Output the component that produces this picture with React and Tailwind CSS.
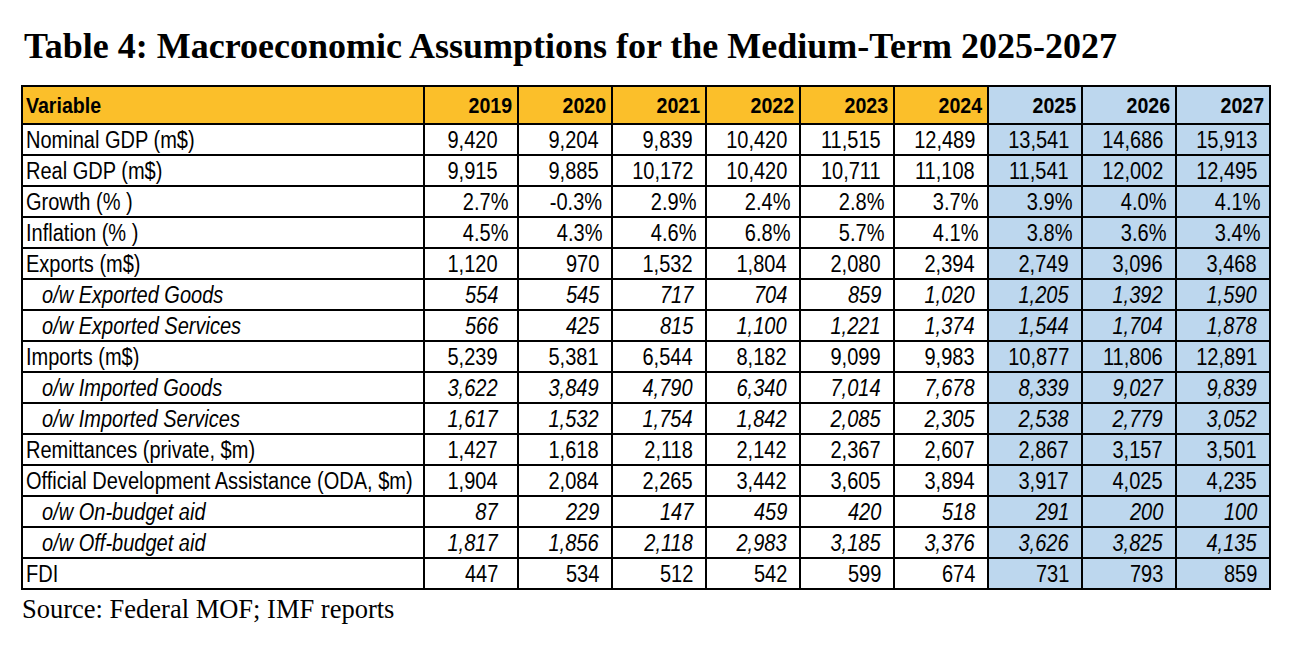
const years = ['2019', '2020', '2021', '2022', '2023', '2024', '2025', '2026', '2027'];

const rows = [
  { label: 'Nominal GDP (m$)', v: ['9,420', '9,204', '9,839', '10,420', '11,515', '12,489', '13,541', '14,686', '15,913'] },
  { label: 'Real GDP (m$)', v: ['9,915', '9,885', '10,172', '10,420', '10,711', '11,108', '11,541', '12,002', '12,495'] },
  { label: 'Growth (% )', pct: true, v: ['2.7%', '-0.3%', '2.9%', '2.4%', '2.8%', '3.7%', '3.9%', '4.0%', '4.1%'] },
  { label: 'Inflation (% )', pct: true, v: ['4.5%', '4.3%', '4.6%', '6.8%', '5.7%', '4.1%', '3.8%', '3.6%', '3.4%'] },
  { label: 'Exports (m$)', v: ['1,120', '970', '1,532', '1,804', '2,080', '2,394', '2,749', '3,096', '3,468'] },
  { label: 'o/w Exported Goods', sub: true, v: ['554', '545', '717', '704', '859', '1,020', '1,205', '1,392', '1,590'] },
  { label: 'o/w Exported Services', sub: true, v: ['566', '425', '815', '1,100', '1,221', '1,374', '1,544', '1,704', '1,878'] },
  { label: 'Imports (m$)', v: ['5,239', '5,381', '6,544', '8,182', '9,099', '9,983', '10,877', '11,806', '12,891'] },
  { label: 'o/w Imported Goods', sub: true, v: ['3,622', '3,849', '4,790', '6,340', '7,014', '7,678', '8,339', '9,027', '9,839'] },
  { label: 'o/w Imported Services', sub: true, v: ['1,617', '1,532', '1,754', '1,842', '2,085', '2,305', '2,538', '2,779', '3,052'] },
  { label: 'Remittances (private, $m)', v: ['1,427', '1,618', '2,118', '2,142', '2,367', '2,607', '2,867', '3,157', '3,501'] },
  { label: 'Official Development Assistance (ODA, $m)', v: ['1,904', '2,084', '2,265', '3,442', '3,605', '3,894', '3,917', '4,025', '4,235'] },
  { label: 'o/w On-budget aid', sub: true, v: ['87', '229', '147', '459', '420', '518', '291', '200', '100'] },
  { label: 'o/w Off-budget aid', sub: true, v: ['1,817', '1,856', '2,118', '2,983', '3,185', '3,376', '3,626', '3,825', '4,135'] },
  { label: 'FDI', v: ['447', '534', '512', '542', '599', '674', '731', '793', '859'] },
];

// reference is set in a condensed grotesque; squeeze Liberation Sans to match
const sans = { fontFamily: '"Liberation Sans", Arial, sans-serif' };
const serif = { fontFamily: '"Liberation Serif", "Times New Roman", serif' };

function Narrow({ right, children }) {
  return (
    <span className={`inline-block whitespace-nowrap scale-x-[0.87] ${right ? 'origin-right' : 'origin-left'}`}>
      {children}
    </span>
  );
}

export default function App() {
  return (
    <div className="min-h-screen bg-white pt-[25px] pl-[21px]">
      <h1 className="text-[36px] leading-[42px] font-bold text-black pl-[3px]" style={serif}>
        Table 4: Macroeconomic Assumptions for the Medium-Term 2025-2027
      </h1>
      <table className="mt-[18px] table-fixed w-[1246px] border-collapse border border-[#555] text-black" style={sans}>
        <colgroup>
          <col className="w-[402px]" />
          {years.map((y) => <col key={y} className="w-[94px]" />)}
        </colgroup>
        <thead>
          <tr className="h-[38px] bg-[#fbbf2a] text-[22.5px] leading-none font-bold">
            <th className="border-2 border-black text-left pl-[3px] pt-[3px]">
              <Narrow>Variable</Narrow>
            </th>
            {years.map((y, i) => (
              <th key={y} className={`border-2 border-black text-right pr-[5px] pt-[3px] ${i > 5 ? 'bg-[#bdd7ee]' : ''}`}>
                <Narrow right>{y}</Narrow>
              </th>
            ))}
          </tr>
        </thead>
        <tbody className="text-[23px]">
          {rows.map((r) => (
            <tr key={r.label} className="h-[31px] leading-none">
              <td className={`border-2 border-black pt-[2px] ${r.sub ? 'italic pl-[19px]' : 'pl-[3px]'}`}>
                <Narrow>{r.label}</Narrow>
              </td>
              {r.v.map((v, i) => (
                <td
                  key={i}
                  className={`border-2 border-black text-right pt-[2px] ${r.sub ? 'italic' : ''} ${i > 5 ? 'bg-[#bdd7ee]' : ''} ${r.pct ? 'pr-[9px]' : i === 0 ? 'pr-[19px]' : 'pr-[12px]'}`}
                >
                  <Narrow right>{v}</Narrow>
                </td>
              ))}
            </tr>
          ))}
        </tbody>
      </table>
      <p className="mt-[3px] pl-[1px] text-[26.5px] leading-[32px] text-black" style={serif}>
        Source: Federal MOF; IMF reports
      </p>
    </div>
  );
}
